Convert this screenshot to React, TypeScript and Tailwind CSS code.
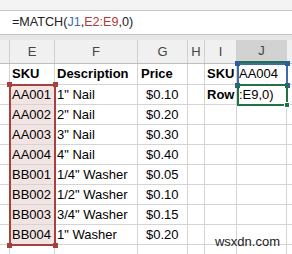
import React from "react";

const cols = [
  { k: "D", w: "w-[10px]" },
  { k: "E", w: "w-[45px]" },
  { k: "F", w: "w-[83px]" },
  { k: "G", w: "w-[50px]" },
  { k: "H", w: "w-[17px]" },
  { k: "I", w: "w-[32px]" },
  { k: "J", w: "w-[50px]" },
  { k: "K", w: "w-[20px]" },
];

type Cell = { t?: string; b?: boolean; pad?: string };

const rows: { h: string; cells: Cell[] }[] = [
  {
    h: "h-[21px]",
    cells: [
      {},
      { t: "SKU", b: true },
      { t: "Description", b: true },
      { t: "Price", b: true, pad: "pl-[3px]" },
      {},
      { t: "SKU", b: true },
      { t: "AA004" },
      {},
    ],
  },
  ...[
    ["AA001", '1" Nail', "$0.10"],
    ["AA002", '2" Nail', "$0.20"],
    ["AA003", '3" Nail', "$0.30"],
    ["AA004", '4" Nail', "$0.40"],
    ["BB001", '1/4" Washer', "$0.05"],
    ["BB002", '1/2" Washer', "$0.10"],
    ["BB003", '3/4" Washer', "$0.15"],
    ["BB004", '1" Washer', "$0.20"],
  ].map((r, i) => ({
    h: "h-[20px]",
    cells: [
      {},
      { t: r[0] },
      { t: r[1] },
      { t: r[2], pad: "pl-[8px]" },
      {},
      i === 0 ? { t: "Row", b: true } : {},
      i === 0 ? { t: ":E9,0)" } : {},
      {},
    ] as Cell[],
  })),
  { h: "h-[20px]", cells: [{}, {}, {}, {}, {}, {}, {}, {}] },
];

export default function App() {
  return (
    <div className="relative w-[292px] h-[254px] overflow-hidden bg-white font-['Liberation_Sans',Arial,sans-serif] text-black">
      <div className="h-[10px] bg-[#f3f3f3]" />
      <div className="h-[25px] border-y border-[#c6c6c6] bg-white flex items-center pl-[12px] text-[12.6px] text-[#222]">
        <span>=MATCH(</span>
        <span className="text-[#3a6bb0]">J1</span>
        <span>,</span>
        <span className="text-[#b23a36]">E2:E9</span>
        <span>,0)</span>
      </div>
      <div className="h-[5px] bg-[#e6e6e6]" />
      {/* column headers */}
      <div className="flex h-[24px] bg-[#f0f0f0] border-b border-[#bdbdbd] text-[13px] text-[#444]">
        {cols.map((c) => (
          <div
            key={c.k}
            className={`${c.w} shrink-0 flex items-center justify-center border-r border-[#d0d0d0] ${
              c.k === "J" ? "bg-[#d2d2d2] border-b-2 border-b-[#217346]" : ""
            }`}
          >
            {c.k === "D" || c.k === "K" ? "" : c.k}
          </div>
        ))}
      </div>
      {rows.map((r, ri) => (
        <div key={ri} className={`flex ${r.h} text-[13px]`}>
          {r.cells.map((c, ci) => (
            <div
              key={ci}
              className={`${cols[ci].w} shrink-0 border-r border-b border-[#d4d4d4] flex items-center overflow-visible whitespace-nowrap ${
                c.pad ?? "pl-[2px]"
              } ${c.b ? "font-bold" : ""} ${ci === 1 && ri >= 1 && ri <= 8 ? "bg-[#f2e4e3]" : ""}`}
            >
              {c.t}
            </div>
          ))}
        </div>
      ))}

      {/* E2:E9 red reference box */}
      <div className="absolute left-[9px] top-[84px] w-[47px] h-[162px] border-2 border-[#a8413d]">
        <div className="absolute -left-[4px] -top-[4px] w-[5px] h-[5px] bg-[#a8413d]" />
        <div className="absolute -right-[4px] -top-[4px] w-[5px] h-[5px] bg-[#a8413d]" />
        <div className="absolute -left-[4px] -bottom-[4px] w-[5px] h-[5px] bg-[#a8413d]" />
        <div className="absolute -right-[4px] -bottom-[4px] w-[5px] h-[5px] bg-[#a8413d]" />
      </div>

      {/* J1 blue reference box */}
      <div className="absolute left-[237px] top-[63px] w-[51px] h-[23px] border-2 border-[#3d6cae]">
        <div className="absolute -left-[4px] -top-[4px] w-[5px] h-[5px] bg-[#2f5d9c]" />
        <div className="absolute -right-[4px] -top-[4px] w-[5px] h-[5px] bg-[#2f5d9c]" />
        <div className="absolute -left-[4px] -bottom-[4px] w-[5px] h-[5px] bg-[#2f5d9c]" />
        <div className="absolute -right-[4px] -bottom-[4px] w-[5px] h-[5px] bg-[#2f5d9c]" />
      </div>

      {/* J2 active cell green */}
      <div className="absolute left-[237px] top-[84px] w-[51px] h-[22px] border-2 border-[#217346]">
        <div className="absolute -right-[4px] -bottom-[4px] w-[6px] h-[6px] bg-[#217346] border border-white" />
      </div>

      {/* watermark */}
      <div className="absolute right-[12px] bottom-[3px] text-[13px] text-[#222]">wsxdn.com</div>
    </div>
  );
}
